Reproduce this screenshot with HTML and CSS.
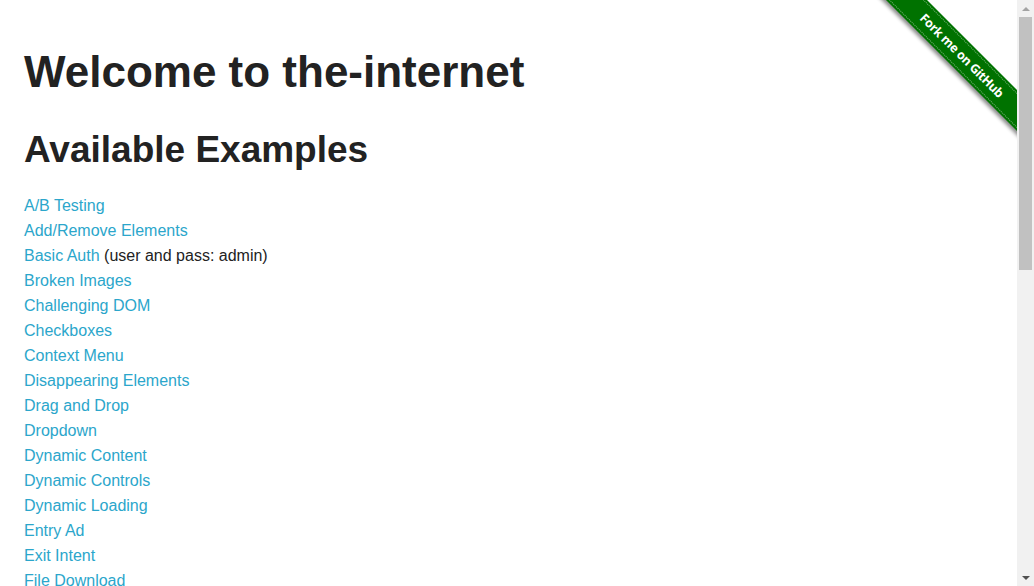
FILE: index.html
```html
<!DOCTYPE html>
<html lang="en">
<head>
<meta charset="utf-8">
<title>The Internet</title>
<link rel="stylesheet" href="styles.css">
</head>
<body>
<div class="viewport">
  <div class="ribbon-wrap">
    <a class="ribbon" href="#"><span class="ribbon-inner">Fork me on GitHub</span></a>
  </div>
  <div class="page">
    <h1 class="title">Welcome to the-internet</h1>
    <h2 class="subtitle">Available Examples</h2>
    <ul class="examples">
      <li><a href="#">A/B Testing</a></li>
      <li><a href="#">Add/Remove Elements</a></li>
      <li><a href="#">Basic Auth</a> (user and pass: admin)</li>
      <li><a href="#">Broken Images</a></li>
      <li><a href="#">Challenging DOM</a></li>
      <li><a href="#">Checkboxes</a></li>
      <li><a href="#">Context Menu</a></li>
      <li><a href="#">Disappearing Elements</a></li>
      <li><a href="#">Drag and Drop</a></li>
      <li><a href="#">Dropdown</a></li>
      <li><a href="#">Dynamic Content</a></li>
      <li><a href="#">Dynamic Controls</a></li>
      <li><a href="#">Dynamic Loading</a></li>
      <li><a href="#">Entry Ad</a></li>
      <li><a href="#">Exit Intent</a></li>
      <li><a href="#">File Download</a></li>
    </ul>
  </div>
</div>
<div class="scrollbar" aria-hidden="true">
  <div class="sb-btn"><span class="arrow-up"></span></div>
  <div class="sb-track"><div class="sb-thumb"></div></div>
  <div class="sb-btn"><span class="arrow-down"></span></div>
</div>
</body>
</html>
```

FILE: styles.css
```css
html {
  background: #fff;
}
body {
  margin: 0;
  height: 100vh;
  overflow: hidden;
  display: flex;
  font-family: "Liberation Sans", Arial, Helvetica, sans-serif;
  color: #222222;
  background: #fff;
}
.viewport {
  position: relative;
  flex: 1;
  min-width: 0;
  height: 100vh;
  overflow: hidden;
}
.page {
  padding: 41px 24px 0;
}
.title {
  margin: 0 0 21px;
  font-size: 44px;
  line-height: 1.4;
  font-weight: bold;
  color: #222222;
}
.subtitle {
  margin: 0 0 18px;
  font-size: 37px;
  line-height: 1.4;
  font-weight: bold;
  color: #222222;
}
.examples {
  margin: 0;
  padding: 0;
  list-style: none;
}
.examples li {
  font-size: 16px;
  line-height: 25px;
}
a {
  color: #2ba6cb;
  text-decoration: none;
}

/* ribbon */
.ribbon-wrap {
  position: absolute;
  top: 0;
  right: 0;
  width: 149px;
  height: 149px;
  overflow: hidden;
  pointer-events: none;
}
.ribbon {
  position: absolute;
  left: -16px;
  top: 41px;
  width: 220px;
  height: 29px;
  box-sizing: border-box;
  padding: 2px 0;
  background: #007200;
  transform: rotate(45deg);
  box-shadow: -1px 3px 4px rgba(0, 0, 0, 0.45);
  pointer-events: auto;
}
.ribbon-inner {
  display: block;
  height: 25px;
  box-sizing: border-box;
  border-top: 1px dotted rgba(255, 255, 255, 0.45);
  border-bottom: 1px dotted rgba(255, 255, 255, 0.45);
  color: #fff;
  font-family: "Open Sans", "DejaVu Sans", sans-serif;
  font-weight: bold;
  font-size: 12.5px;
  line-height: 23px;
  text-align: center;
  letter-spacing: -0.3px;
}

/* drawn scrollbar */
.scrollbar {
  flex: 0 0 17px;
  width: 17px;
  height: 100vh;
  background: #f1f1f1;
  display: flex;
  flex-direction: column;
}
.sb-btn {
  flex: 0 0 17px;
  display: flex;
  align-items: center;
  justify-content: center;
}
.arrow-up {
  width: 0;
  height: 0;
  border-left: 4px solid transparent;
  border-right: 4px solid transparent;
  border-bottom: 4px solid #a3a3a3;
}
.arrow-down {
  width: 0;
  height: 0;
  border-left: 4px solid transparent;
  border-right: 4px solid transparent;
  border-top: 4px solid #505050;
}
.sb-track {
  flex: 1;
  padding: 0 2px;
}
.sb-thumb {
  height: 253px;
  background: #c1c1c1;
}
```
